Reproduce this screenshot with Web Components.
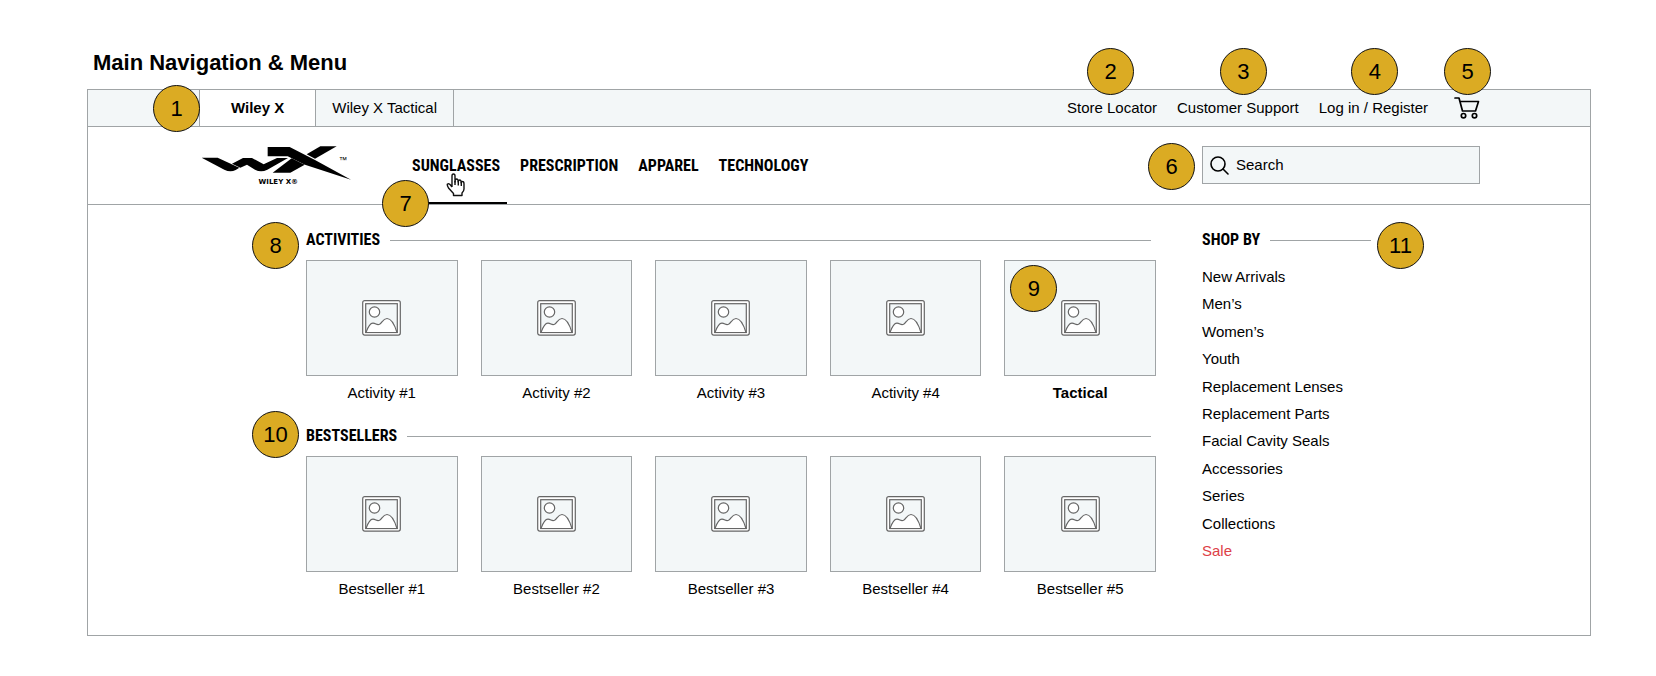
<!DOCTYPE html>
<html lang="en">
<head>
<meta charset="utf-8">
<title>Main Navigation &amp; Menu</title>
<style>
  body {
    margin: 0;
    padding: 49px 65px 40px 87px;
    background: #fff;
    color: #000;
    font: 15px/20px "Liberation Sans", Arial, sans-serif;
    --line: #a0a4a6;
    --tint: #f3f7f8;
    --condensed: bold 16px/20px "Roboto Condensed", Roboto, sans-serif;
  }
  h1 { margin: 0 0 12px 6px; font-size: 22px; line-height: 28px; }
</style>
</head>
<body>
<h1>Main Navigation &amp; Menu</h1>
<wx-frame></wx-frame>

<script>
const define = (name, html) => {
  const template = document.createElement('template');
  template.innerHTML = html;
  customElements.define(name, class extends HTMLElement {
    constructor() {
      super();
      this.attachShadow({ mode: 'open' }).append(template.content.cloneNode(true));
    }
  });
};

/* Numbered annotation, centred on --x / --y of its anchor */
define('note-pin', `
<style>
  :host {
    position: absolute; left: var(--x); top: var(--y); z-index: 2;
    box-sizing: border-box; width: 47px; height: 47px; margin: -23px 0 0 -23px;
    border: 1px solid #111; border-radius: 50%; background: #dbab23;
    color: #000; font: 22px/45px "Liberation Sans", Arial, sans-serif; text-align: center;
  }
</style><slot></slot>`);

define('wx-logo', `
<style>
  :host { display: block; width: 152px; height: 44px; }
  a, svg { display: block; }
</style>
<a href="#" aria-label="Wiley X">
<svg width="152" height="44" viewBox="31 30 456 132">
  <path d="M36 68H84L149 98L138 105Q122 113 104 104Z"/>
  <path d="M127 86L160 69H187L222 88L262 69H295L233 104Q214 113 196 104L172 89L152 98Z"/>
  <path d="M234 36H300L376 75L484 134L346 89L294 64H234Z"/>
  <path d="M392 34H441L376 71L351 58Z"/>
  <path d="M306 70L345 89L302 113H249Z"/>
  <text x="447" y="84" font-family="Liberation Sans, sans-serif" font-size="25">™</text>
  <text x="266" y="148" text-anchor="middle" font-family="DejaVu Sans, sans-serif" font-weight="bold" font-size="21">WILEY X®</text>
</svg></a>`);

define('top-bar', `
<style>
  :host { display: flex; height: 36px; padding: 0 110px 0 111px; background: var(--tint); border-bottom: 1px solid var(--line); }
  a { color: inherit; text-decoration: none; }
  nav { display: flex; position: relative; }
  .tabs a { padding: 8px 16px; border-right: 1px solid var(--line); }
  .tabs a.current { padding: 8px 31px; border-left: 1px solid var(--line); background: #fff; font-weight: bold; }
  .links { margin-left: auto; gap: 20px; align-items: center; }
  span { position: relative; display: block; }
  .cart { margin-left: 6px; }
  svg { display: block; }
</style>
<nav class="tabs" aria-label="Sites">
  <a class="current" href="#">Wiley X</a><a href="#">Wiley X Tactical</a>
  <note-pin style="--x:-23px;--y:18px">1</note-pin>
</nav>
<nav class="links" aria-label="Account">
  <span><a href="#">Store Locator</a><note-pin style="--x:48%;--y:-27px">2</note-pin></span>
  <span><a href="#">Customer Support</a><note-pin style="--x:54%;--y:-27px">3</note-pin></span>
  <span><a href="#">Log in / Register</a><note-pin style="--x:51%;--y:-27px">4</note-pin></span>
  <span class="cart"><a href="#" aria-label="Cart">
    <svg width="26" height="22" viewBox="0 0 26 22" fill="none" stroke="#000" stroke-width="1.7" stroke-linejoin="round" stroke-linecap="round">
      <path d="M1 1H5L8.500 14H21.500L24.500 4.500H6"/><circle cx="9.500" cy="18.700" r="2.200"/><circle cx="20.500" cy="18.700" r="2.200"/>
    </svg></a><note-pin style="--x:50%;--y:-26px">5</note-pin></span>
</nav>`);

define('search-box', `
<style>
  :host { position: relative; display: block; width: 278px; }
  label { display: flex; align-items: center; gap: 7px; height: 36px; padding-left: 7px; background: var(--tint); border: 1px solid var(--line); }
  svg { flex: none; }
  input { flex: 1; min-width: 0; padding: 0; border: 0; outline: 0; background: none; color: #000; font: inherit; }
  input::placeholder { color: #000; opacity: 1; }
</style>
<label>
  <svg width="19" height="19" viewBox="0 0 19 19" fill="none" stroke="#000" stroke-width="1.6" stroke-linecap="round"><circle cx="8" cy="8" r="7"/><path d="M13 13L18 18"/></svg>
  <input type="search" placeholder="Search" aria-label="Search">
</label>
<note-pin style="--x:-31px;--y:20px">6</note-pin>`);

define('main-bar', `
<style>
  :host { display: flex; align-items: flex-start; height: 77px; padding: 0 110px 0 112px; border-bottom: 1px solid var(--line); }
  wx-logo { margin-top: 18px; }
  nav { display: flex; gap: 6px; height: 77px; margin-left: 53px; font: var(--condensed); }
  nav span { position: relative; display: flex; }
  nav a { box-sizing: border-box; padding: 29px 7px 0; color: inherit; text-decoration: none; }
  a.current { border-bottom: 2px solid #000; }
  .hand { position: absolute; left: 41px; top: 46px; }
  search-box { margin: 19px 0 0 auto; }
</style>
<wx-logo></wx-logo>
<nav aria-label="Main">
  <span><a class="current" href="#">SUNGLASSES</a>
    <svg class="hand" width="19" height="24" viewBox="0 0 19 24" fill="#fff" stroke="#111" stroke-width="1.4" stroke-linejoin="round">
      <path d="M6 14V3Q6 1 7.500 1Q9 1 9 3V9Q9 6 10.500 6Q12.300 6 12.300 9Q12.300 7 13.500 7Q15.300 7 15.300 10Q15.300 8.300 16.500 8.500Q18 8.500 18 11V16Q18 18 16 20V22.500H7.500V20.500L2.500 15Q.7 12 1.500 11Q3 10 4.500 12L6 14"/>
      <path d="M9 8V12M12.300 8V12.500M15.300 9V13" fill="none"/>
    </svg>
    <note-pin style="--x:0px;--y:76px">7</note-pin></span>
  <span><a href="#">PRESCRIPTION</a></span>
  <span><a href="#">APPAREL</a></span>
  <span><a href="#">TECHNOLOGY</a></span>
</nav>
<search-box></search-box>`);

/* Heading followed by a rule that fills the remaining width */
define('ruled-heading', `
<style>
  :host { position: relative; display: flex; align-items: center; gap: 10px; }
  h2 { margin: 0; font: var(--condensed); }
  i { flex: 1; height: 1px; background: var(--line); }
</style><h2><slot></slot></h2><i></i><slot name="pin"></slot>`);

define('image-card', `
<style>
  :host { position: relative; display: block; text-align: center; }
  a { color: inherit; text-decoration: none; }
  .box { display: flex; align-items: center; justify-content: center; height: 114px; margin-bottom: 7px; border: 1px solid var(--line); background: var(--tint); }
</style>
<a href="#"><div class="box">
  <svg width="39" height="36" viewBox="0 0 39 36" fill="none" stroke="#666" stroke-width="1.2">
    <rect x=".7" y=".7" width="37.600" height="34.400" rx="2" fill="#fff"/>
    <rect x="3.700" y="3.700" width="31.600" height="28.800" fill="#f3f7f8"/>
    <path d="M4 32.500C6 27 8 23 11 23.200C14 23.400 15 25.500 17.500 24.300C20 23 21 18.500 25 18.500C30 18.500 33 26 35 32.500Z" fill="#fff"/>
    <circle cx="12.500" cy="12" r="5.200" fill="#fff"/>
  </svg></div>
  <slot></slot></a><slot name="pin"></slot>`);

define('card-section', `
<style>
  :host { display: block; }
  ruled-heading { margin-right: 5px; }
  .cards { display: grid; grid-template-columns: repeat(5, 1fr); gap: 23px; margin-top: 10px; }
</style>
<ruled-heading><slot name="title"></slot><slot name="pin" slot="pin"></slot></ruled-heading>
<div class="cards"><slot></slot></div>`);

define('shop-list', `
<style>
  :host { display: block; width: 278px; }
  ruled-heading { width: 169px; }
  ul { display: grid; grid-auto-rows: 1fr; align-items: center; min-height: 302px; margin: 13px 0 0; padding: 0; list-style: none; }
  a { color: inherit; text-decoration: none; }
  .sale { color: #dd4147; }
</style>
<ruled-heading>SHOP BY<note-pin slot="pin" style="--x:198px;--y:15px">11</note-pin></ruled-heading>
<ul>
  <li><a href="#">New Arrivals</a></li>
  <li><a href="#">Men’s</a></li>
  <li><a href="#">Women’s</a></li>
  <li><a href="#">Youth</a></li>
  <li><a href="#">Replacement Lenses</a></li>
  <li><a href="#">Replacement Parts</a></li>
  <li><a href="#">Facial Cavity Seals</a></li>
  <li><a href="#">Accessories</a></li>
  <li><a href="#">Series</a></li>
  <li><a href="#">Collections</a></li>
  <li><a class="sale" href="#">Sale</a></li>
</ul>`);

define('mega-menu', `
<style>
  :host { display: flex; gap: 46px; padding: 25px 110px 36px 218px; }
  .sections { flex: 1; display: grid; gap: 23px; }
</style>
<div class="sections">
  <card-section><span slot="title">ACTIVITIES</span><note-pin slot="pin" style="--x:-31px;--y:15px">8</note-pin>
    <image-card>Activity #1</image-card>
    <image-card>Activity #2</image-card>
    <image-card>Activity #3</image-card>
    <image-card>Activity #4</image-card>
    <image-card><b>Tactical</b><note-pin slot="pin" style="--x:29px;--y:28px">9</note-pin></image-card>
  </card-section>
  <card-section><span slot="title">BESTSELLERS</span><note-pin slot="pin" style="--x:-31px;--y:8px">10</note-pin>
    <image-card>Bestseller #1</image-card>
    <image-card>Bestseller #2</image-card>
    <image-card>Bestseller #3</image-card>
    <image-card>Bestseller #4</image-card>
    <image-card>Bestseller #5</image-card>
  </card-section>
</div>
<shop-list></shop-list>`);

define('wx-frame', `
<style>:host { display: block; border: 1px solid var(--line); }</style>
<top-bar></top-bar><main-bar></main-bar><mega-menu></mega-menu>`);
</script>
</body>
</html>
